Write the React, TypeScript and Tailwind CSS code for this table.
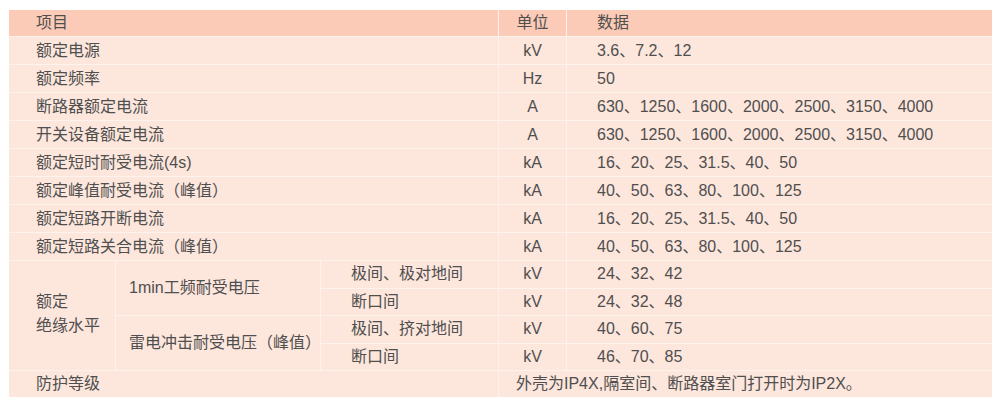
import React from "react";

const F = { fontFamily: '"Liberation Sans","Noto Sans CJK SC",sans-serif' };

const simple: [string, string, string][] = [
  ["额定电源", "kV", "3.6、7.2、12"],
  ["额定频率", "Hz", "50"],
  ["断路器额定电流", "A", "630、1250、1600、2000、2500、3150、4000"],
  ["开关设备额定电流", "A", "630、1250、1600、2000、2500、3150、4000"],
  ["额定短时耐受电流(4s)", "kA", "16、20、25、31.5、40、50"],
  ["额定峰值耐受电流（峰值）", "kA", "40、50、63、80、100、125"],
  ["额定短路开断电流", "kA", "16、20、25、31.5、40、50"],
  ["额定短路关合电流（峰值）", "kA", "40、50、63、80、100、125"],
];

const body = "bg-[#fde6dc] flex items-center";

export default function App() {
  return (
    <div className="w-[1000px] h-[404px] bg-white pt-[10px] pl-[9px]" style={F}>
      <div className="w-[983px] grid grid-cols-[106px_204px_177px_67px_425px] grid-rows-[26px_repeat(8,27px)_repeat(4,26.5px)_26px] gap-px bg-[#fdf2ec] text-[16px] text-[#4f4f4f] leading-none">
        <div className="col-span-3 bg-[#fccbb7] flex items-center pl-[27px]">项目</div>
        <div className="bg-[#fccbb7] flex items-center justify-center">单位</div>
        <div className="bg-[#fccbb7] flex items-center pl-[30px]">数据</div>
        {simple.map(([a, u, v]) => (
          <React.Fragment key={a}>
            <div className={`col-span-3 ${body} pl-[27px]`}>{a}</div>
            <div className={`${body} justify-center`}>{u}</div>
            <div className={`${body} pl-[30px]`}>{v}</div>
          </React.Fragment>
        ))}
        <div className={`row-span-4 ${body} pl-[27px] pb-[3px]`}>
          <div className="leading-[24px]">
            额定
            <br />
            绝缘水平
          </div>
        </div>
        <div className={`row-span-2 ${body} pl-[13px]`}>1min工频耐受电压</div>
        <div className={`${body} pl-[30px]`}>极间、极对地间</div>
        <div className={`${body} justify-center`}>kV</div>
        <div className={`${body} pl-[30px]`}>24、32、42</div>
        <div className={`${body} pl-[30px]`}>断口间</div>
        <div className={`${body} justify-center`}>kV</div>
        <div className={`${body} pl-[30px]`}>24、32、48</div>
        <div className={`row-span-2 ${body} pl-[13px]`}>雷电冲击耐受电压（峰值）</div>
        <div className={`${body} pl-[30px]`}>极间、挤对地间</div>
        <div className={`${body} justify-center`}>kV</div>
        <div className={`${body} pl-[30px]`}>40、60、75</div>
        <div className={`${body} pl-[30px]`}>断口间</div>
        <div className={`${body} justify-center`}>kV</div>
        <div className={`${body} pl-[30px]`}>46、70、85</div>
        <div className={`col-span-3 ${body} pl-[27px]`}>防护等级</div>
        <div className={`col-span-2 ${body} pl-[17px]`}>外壳为IP4X,隔室间、断路器室门打开时为IP2X。</div>
      </div>
    </div>
  );
}
